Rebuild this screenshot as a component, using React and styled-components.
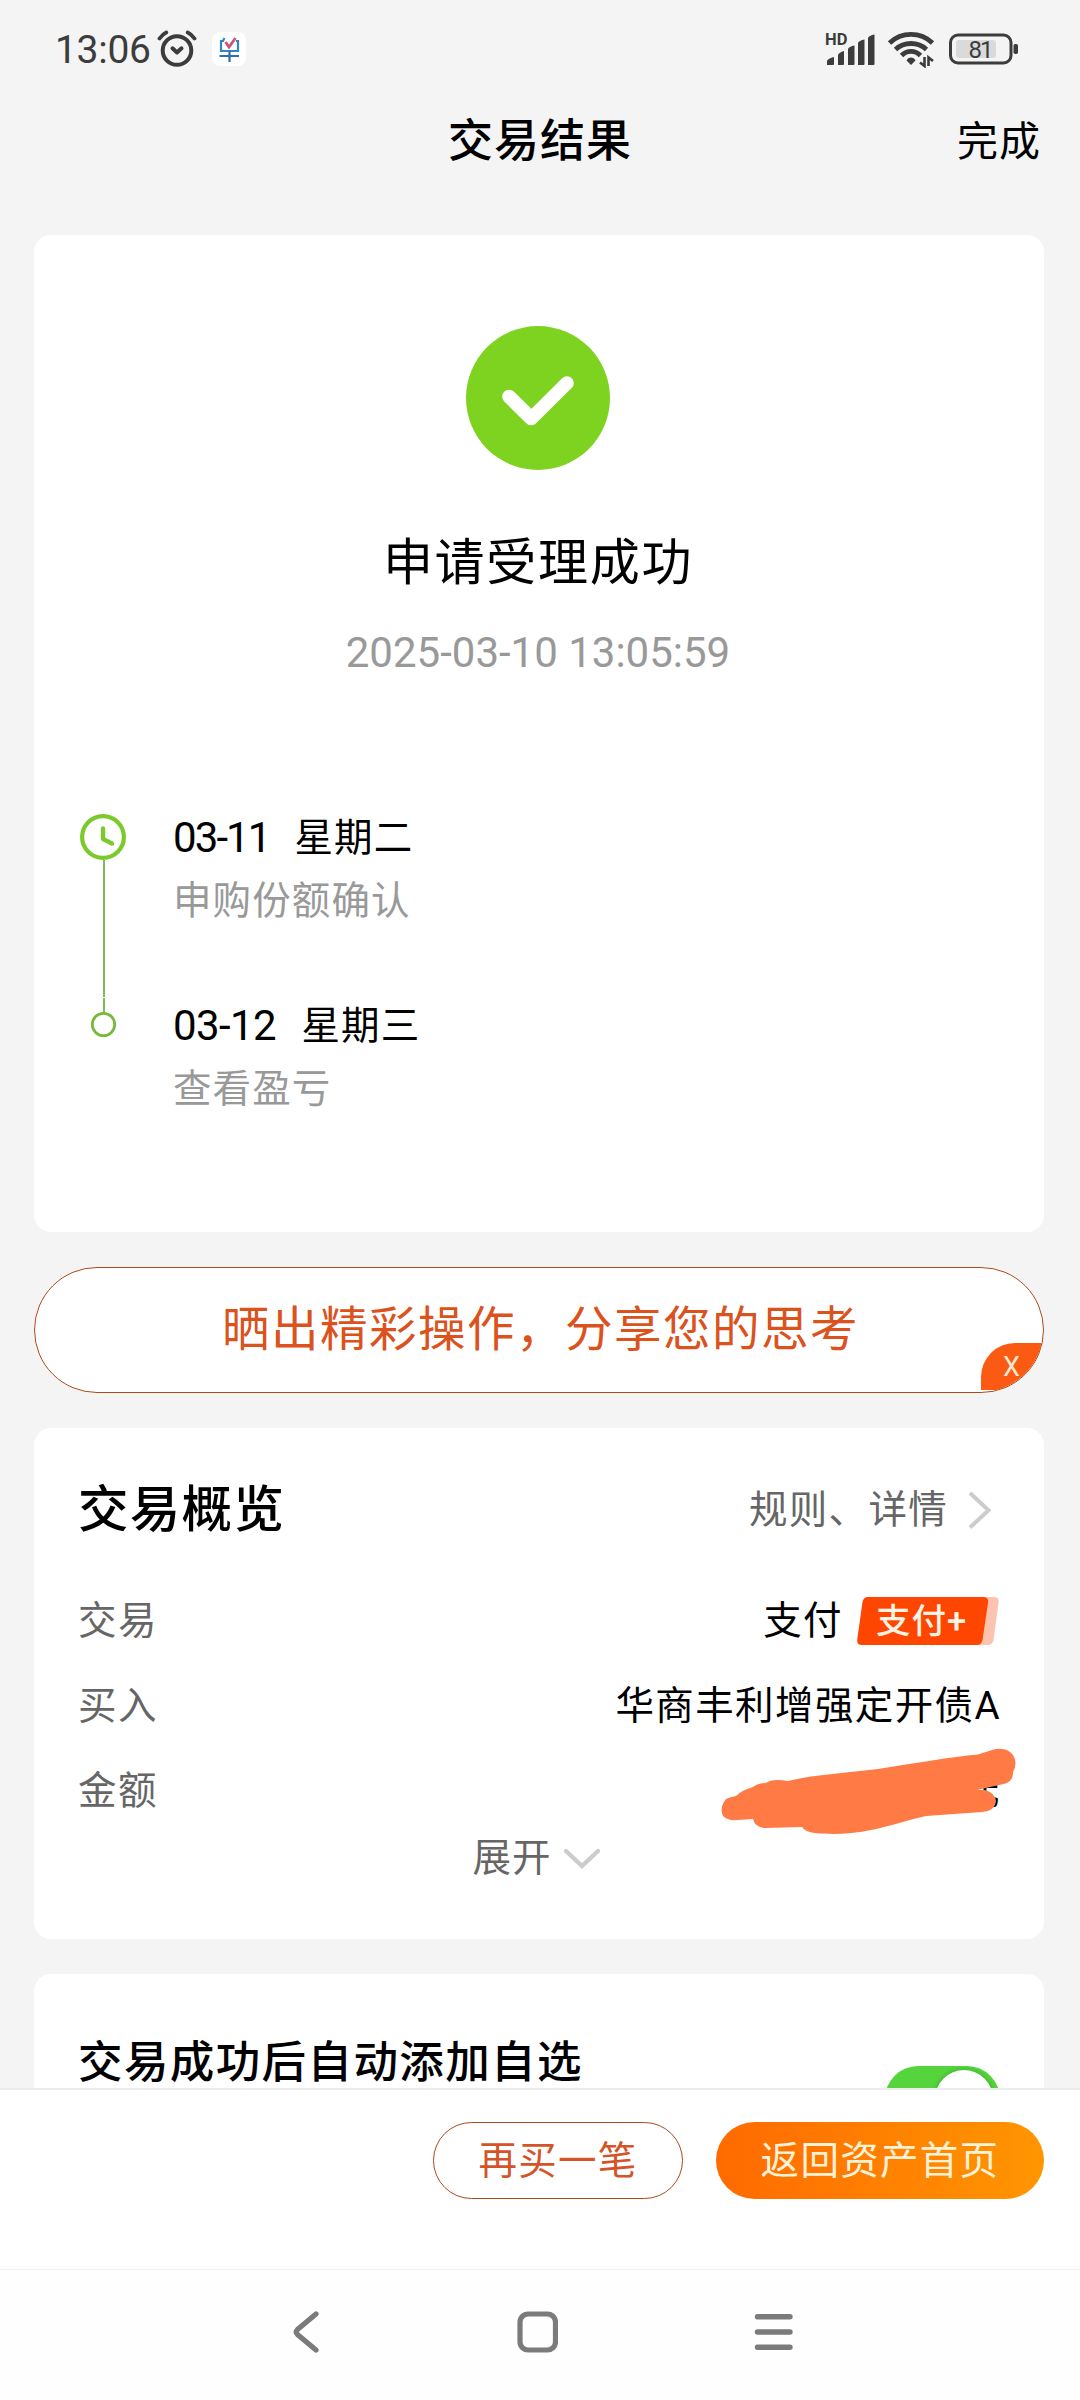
import React from 'react'
import styled, { createGlobalStyle } from 'styled-components'

const GlobalStyle = createGlobalStyle`
  * {
    box-sizing: border-box;
  }
  body {
    margin: 0;
    background: #f4f4f4;
    font-family: Roboto, 'Noto Sans CJK SC', sans-serif;
    color: #000;
  }
`
const Screen = styled.div`
  display: flex;
  flex-direction: column;
  width: 1080px;
  height: 2400px;
  overflow: hidden;
`
const StatusBar = styled.div`
  display: flex;
  justify-content: space-between;
  align-items: center;
  height: 98px;
  padding: 0 61px 0 55px;
  color: #3c3c3c;
`
const StatusGroup = styled.div`
  display: flex;
  align-items: center;
  gap: ${(props) => props.$gap}px;

  & .wifi {
    margin-right: 2px;
  }
`
const Time = styled.span`
  width: 95px;
  padding-top: 2px;
  font-size: 39px;
  line-height: 60px;
  letter-spacing: -0.3px;
  white-space: nowrap;
`
const AppBadge = styled.div`
  display: flex;
  width: 34px;
  height: 34px;
  margin-left: 8px;
  border-radius: 8px;
  background: #fff;
`
const TitleBar = styled.header`
  display: grid;
  grid-template-columns: 1fr auto 1fr;
  align-items: center;
  height: 84px;
  padding: 4px 39px 0;
  margin-bottom: 53px;
`
const Title = styled.h1`
  grid-column: 2;
  margin: 0;
  font-size: 45px;
  font-weight: 500;
  line-height: 80px;
  letter-spacing: 1px;
`
const Done = styled.span`
  justify-self: end;
  font-size: 41px;
  line-height: 78px;
  letter-spacing: 1px;
`
const Content = styled.main`
  display: flex;
  flex: 1;
  flex-direction: column;
  gap: 35px;
  min-height: 0;
  padding: 0 36px 0 34px;
  overflow: hidden;
`
const Card = styled.section`
  flex: none;
  height: ${(props) => props.$height}px;
  padding: ${(props) => props.$padding};
  border-radius: 17px;
  background: #fff;
`
const Result = styled.div`
  display: flex;
  flex-direction: column;
  align-items: center;
  padding-right: 2px;
`
const ResultText = styled.div`
  margin-top: 57px;
  font-size: 50px;
  line-height: 72px;
  letter-spacing: 1.7px;
`
const ResultTime = styled.div`
  margin-top: 24px;
  color: #999;
  font-size: 42px;
  line-height: 60px;
`
const Timeline = styled.div`
  display: grid;
  grid-template-columns: 46px 1fr;
  column-gap: 47px;
  margin-top: 125px;

  & > svg {
    margin-top: 6px;
  }
`
const Steps = styled.div`
  display: flex;
  flex-direction: column;
  gap: 64px;
`
const Step = styled.div`
  font-size: 38.5px;
  line-height: 62px;
  letter-spacing: 1.1px;
`
const StepDate = styled.div`
  display: flex;
  margin: -1px 0 1px;
`
const DateText = styled.span`
  width: ${(props) => props.$width}px;
  font-size: 42px;
  letter-spacing: ${(props) => props.$spacing}px;
`
const StepNote = styled.div`
  color: #999;
`
const ShareBanner = styled.div`
  position: relative;
  flex: none;
  height: 126px;
  padding-left: 3px;
  border: 1px solid #ad4a1a;
  border-radius: 63px;
  background: #fff;
  color: #db521d;
  font-size: 47.5px;
  line-height: 124px;
  letter-spacing: 1.5px;
  text-align: center;
  overflow: hidden;
`
const CloseTag = styled.span`
  position: absolute;
  right: 0;
  bottom: 2px;
  width: 62px;
  height: 47px;
  padding-right: 23px;
  border-top-left-radius: 34px;
  background: #fb5a13;
  color: #ffe9d2;
  font-size: 27px;
  line-height: 49px;
  letter-spacing: 0;
  text-align: right;
`
const CardHead = styled.div`
  display: flex;
  justify-content: space-between;
  align-items: center;
  height: 72px;
  margin-bottom: 32px;
`
const CardTitle = styled.h2`
  margin: 0;
  font-size: ${(props) => props.$size}px;
  font-weight: 500;
  line-height: 74px;
  letter-spacing: ${(props) => props.$spacing}px;
`
const MoreLink = styled.div`
  display: flex;
  align-items: center;
  gap: 20px;
  padding-right: 9px;
  color: #666;
  font-size: 38.5px;
  line-height: 50px;
  letter-spacing: 1.3px;
`
const Row = styled.div`
  position: relative;
  display: flex;
  justify-content: space-between;
  align-items: center;
  height: 85px;
  font-size: 38.5px;
  line-height: 50px;
  letter-spacing: 1.4px;
`
const Label = styled.span`
  color: #666;
`
const Value = styled.span`
  display: flex;
  align-items: center;
  gap: 14px;
`
const PayTag = styled.span`
  position: relative;
  width: 142px;
  height: 48px;
  margin-right: 2px;

  & svg {
    display: block;
  }
`
const PayTagText = styled.span`
  position: absolute;
  left: 19px;
  top: 0;
  color: #fff3e4;
  font-size: 34.5px;
  font-weight: 500;
  line-height: 48px;
  letter-spacing: 1px;
  white-space: nowrap;
`
const Scribble = styled.svg`
  position: absolute;
  right: -15px;
  top: -3px;
`
const Expand = styled.div`
  display: flex;
  justify-content: center;
  align-items: center;
  gap: 12px;
  height: 50px;
  padding-right: 7px;
  color: #666;
  font-size: 38.5px;
  line-height: 50px;
  letter-spacing: 1px;
`
const SwitchRow = styled.div`
  display: flex;
  justify-content: space-between;
  align-items: flex-start;
`
const Switch = styled.div`
  display: flex;
  justify-content: flex-end;
  width: 115px;
  height: 66px;
  margin-top: 40px;
  padding: 4px 7px;
  border-radius: 33px;
  background: #55d43c;
`
const Knob = styled.div`
  width: 58px;
  height: 58px;
  border-radius: 50%;
  background: #fff;
  box-shadow: 0 0 5px rgba(0, 80, 0, 0.35);
`
const Footer = styled.footer`
  display: flex;
  justify-content: flex-end;
  gap: 33px;
  height: 181px;
  padding: 32px 36px 0 0;
  border-top: 2px solid #ececec;
  background: #fff;
`
const Button = styled.button`
  width: ${(props) => props.$width}px;
  height: 77px;
  padding: 0;
  border: ${(props) => (props.$primary ? 'none' : '1px solid #ad4a1a')};
  border-radius: 39px;
  background: ${(props) =>
    props.$primary ? 'linear-gradient(90deg, #ff6a00, #ff9600)' : '#fff'};
  color: ${(props) => (props.$primary ? '#fff2d6' : '#d4542a')};
  font-family: inherit;
  font-size: 38.5px;
  line-height: 74px;
  letter-spacing: 1.3px;
`
const NavBar = styled.nav`
  display: flex;
  justify-content: space-between;
  height: 131px;
  padding: 40px 286px 0 292px;
  border-top: 1px solid #f2f2f2;
  background: #fefefe;
`

const AlarmIcon = () => (
  <svg width='40' height='38' viewBox='0 0 40 38' fill='none' stroke='#3c3c3c'>
    <circle cx='20' cy='20.5' r='14.3' strokeWidth='4' />
    <path d='M2.5 8.5 C4.5 5.5 6.5 3.8 9.3 2.5 M37.5 8.5 C35.5 5.5 33.5 3.8 30.7 2.5' strokeWidth='3.8' strokeLinecap='round' />
    <path d='M15.5 18.3 L20 22.5 L24.5 18.3' strokeWidth='4' strokeLinecap='round' strokeLinejoin='round' />
  </svg>
)

const AppLogo = () => (
  <svg width='34' height='34' viewBox='0 0 34 34' fill='none' strokeWidth='2.2'>
    <path d='M12.5 6 L11 9 H9 V19 H26 V9 H24' stroke='#2f86c8' />
    <path d='M7.5 24 H27 M17.5 19 V30' stroke='#2f6cb4' />
    <path d='M13.5 10 L17 15 L23.5 6' stroke='#cc5577' strokeWidth='2.8' />
  </svg>
)

const SignalIcon = () => (
  <svg width='50' height='40' viewBox='0 -2 50 40' fill='#3c3c3c'>
    <path d='M2 34 V30 Q3 27.5 9 26 V33 Q9 34 8 34 Z' />
    <path d='M13 34 V24 Q14 21.5 19 20 V33 Q19 34 18 34 Z' />
    <path d='M23 34 V18 Q24 15.5 29.5 14.5 V33 Q29.5 34 28.5 34 Z' />
    <path d='M33 34 V12 Q34 9.5 39.5 8.5 V33 Q39.5 34 38.5 34 Z' />
    <path d='M43 34 V7 Q44 4.5 49.5 3.5 V33 Q49.5 34 48.5 34 Z' />
    <text x='0' y='14' fontFamily='Roboto' fontWeight='700' fontSize='16.5'>HD</text>
  </svg>
)

const WifiIcon = () => (
  <svg className='wifi' width='48' height='38' viewBox='0 0 48 38' fill='none' stroke='#3c3c3c' strokeWidth='4.8'>
    <path d='M2.5 13 C14.5 1.5 33.5 1.5 45.5 13' />
    <path d='M8.5 19.5 C17 11.5 31 11.5 39.5 19.5' />
    <path d='M14.5 25.5 C20 20 28 20 33.5 25.5' />
    <path d='M24 27.5 Q27 27.5 28.5 30.5 L24 35 L19.5 30.5 Q21 27.5 24 27.5 Z' fill='#3c3c3c' stroke='none' />
    <path d='M37.5 27 V36 L33 32.5 M41.5 36 V27.5 L46 31' strokeWidth='2.6' />
  </svg>
)

const BatteryIcon = () => (
  <svg width='70' height='32' viewBox='0 0 70 32'>
    <rect x='1.5' y='2' width='60.5' height='28' rx='7.5' fill='none' stroke='#3c3c3c' strokeWidth='3' />
    <rect x='7' y='7' width='40' height='18' rx='3' fill='#dadada' />
    <rect x='64.5' y='11' width='4.5' height='10' rx='1.8' fill='#3c3c3c' />
    <text x='19.5' y='24.5' fontFamily='Roboto' fontSize='24' fill='#3c3c3c' textLength='25'>81</text>
  </svg>
)

const SuccessIcon = () => (
  <svg width='144' height='144' viewBox='0 0 144 144' fill='none'>
    <circle cx='72' cy='72' r='72' fill='#7ed321' />
    <path d='M43 70.5 L65.3 92.5 L101 57' stroke='#fff' strokeWidth='13.7' strokeLinecap='round' strokeLinejoin='round' />
  </svg>
)

const TimelineRail = () => (
  <svg width='46' height='226' viewBox='0 0 46 226' fill='none'>
    <circle cx='23' cy='23' r='20.9' stroke='#7aca2c' strokeWidth='4.2' />
    <path d='M23 14.5 V25 L32 29.5' stroke='#7aca2c' strokeWidth='4.4' strokeLinecap='round' strokeLinejoin='round' />
    <path d='M24 46 V183 M24 184 V199' stroke='#7fb857' strokeWidth='2' />
    <circle cx='23.5' cy='210.5' r='11.2' stroke='#78b83c' strokeWidth='2.8' />
  </svg>
)

const ArrowRight = () => (
  <svg width='24' height='38' viewBox='0 0 24 38' fill='none'>
    <path d='M2 2 L20.5 19.3 L2 36.5' stroke='#ccc' strokeWidth='4' />
  </svg>
)

const ArrowDown = () => (
  <svg width='36' height='24' viewBox='0 0 36 24' fill='none'>
    <path d='M2 5 L18 20 L34 5' stroke='#ccc' strokeWidth='4.4' strokeLinecap='round' />
  </svg>
)

const PayBadge = () => (
  <PayTag>
    <svg width='142' height='48' viewBox='0 0 142 48'>
      <path d='M20 0 H137 Q142.5 0 141.5 6 L136.5 43 Q135.5 48 131 48 H20 Z' fill='#fcc4b0' />
      <path d='M11 0 H126 Q132 0 131 6 L125.5 43 Q124.5 48 120 48 H5 Q-0.5 48 0.3 42 L5.5 5 Q6.5 0 11 0 Z' fill='#ff4600' />
    </svg>
    <PayTagText>支付+</PayTagText>
  </PayTag>
)

const Marker = () => (
  <Scribble width='300' height='92' viewBox='0 0 300 92'>
    <path
      d='M10 54 Q3 63 7 71 Q12 76 21 75 L37 74 Q39 82 48 83 L86 82 Q89 87 99 88 C130 91 152 86 168 82 C184 78 200 73 210 71 L266 67 Q279 66 280 56 Q279 48 269 45 L261 45 L283 40 Q298 38 297 27 Q302 18 297 10 Q290 1 276 5 L262 9.5 C235 12 200 18 162 24 C130 28 95 30 72 36 Q56 33 50 38 Q42 38 37 42 Q26 45 20 51 Q14 52 10 54 Z'
      fill='#ff7a45'
    />
  </Scribble>
)

const App = () => (
  <>
    <GlobalStyle />
    <Screen>
      <StatusBar>
        <StatusGroup $gap={7}>
          <Time>13:06</Time>
          <AlarmIcon />
          <AppBadge>
            <AppLogo />
          </AppBadge>
        </StatusGroup>
        <StatusGroup $gap={12}>
          <SignalIcon />
          <WifiIcon />
          <BatteryIcon />
        </StatusGroup>
      </StatusBar>
      <TitleBar>
        <Title>交易结果</Title>
        <Done>完成</Done>
      </TitleBar>
      <Content>
        <Card $height={997} $padding='91px 46px 0'>
          <Result>
            <SuccessIcon />
            <ResultText>申请受理成功</ResultText>
            <ResultTime>2025-03-10 13:05:59</ResultTime>
          </Result>
          <Timeline>
            <TimelineRail />
            <Steps>
              <Step>
                <StepDate>
                  <DateText $width={121.5} $spacing={-1.9}>03-11</DateText>
                  星期二
                </StepDate>
                <StepNote>申购份额确认</StepNote>
              </Step>
              <Step>
                <StepDate>
                  <DateText $width={128.5} $spacing={-0.6}>03-12</DateText>
                  星期三
                </StepDate>
                <StepNote>查看盈亏</StepNote>
              </Step>
            </Steps>
          </Timeline>
        </Card>
        <ShareBanner>
          晒出精彩操作，分享您的思考
          <CloseTag>X</CloseTag>
        </ShareBanner>
        <Card $height={511} $padding='46px 43px 0 44px'>
          <CardHead>
            <CardTitle $size={50.5} $spacing={1.3}>交易概览</CardTitle>
            <MoreLink>
              规则、详情
              <ArrowRight />
            </MoreLink>
          </CardHead>
          <Row>
            <Label>交易</Label>
            <Value>
              支付
              <PayBadge />
            </Value>
          </Row>
          <Row>
            <Label>买入</Label>
            <Value>华商丰利增强定开债A</Value>
          </Row>
          <Row>
            <Label>金额</Label>
            <Value>元</Value>
            <Marker />
          </Row>
          <Expand>
            展开
            <ArrowDown />
          </Expand>
        </Card>
        <Card $height={240} $padding='52px 44px 0 44px'>
          <SwitchRow>
            <CardTitle $size={44.5} $spacing={1.4}>交易成功后自动添加自选</CardTitle>
            <Switch>
              <Knob />
            </Switch>
          </SwitchRow>
        </Card>
      </Content>
      <Footer>
        <Button $width={250}>再买一笔</Button>
        <Button $width={328} $primary>返回资产首页</Button>
      </Footer>
      <NavBar>
        <svg width='28' height='44' viewBox='0 0 28 44' fill='none'>
          <path d='M24 4 L5.5 19.5 Q3 22 5.5 24.5 L24 40' stroke='#7b7b7b' strokeWidth='5.2' strokeLinecap='round' />
        </svg>
        <svg width='42' height='44' viewBox='0 0 42 44' fill='none'>
          <rect x='4' y='4' width='35.5' height='36' rx='8' stroke='#7b7b7b' strokeWidth='5.2' />
        </svg>
        <svg width='40' height='44' viewBox='0 0 40 44' fill='none'>
          <path d='M3.5 6.7 H36 M3.5 22 H36 M3.5 37.3 H36' stroke='#7b7b7b' strokeWidth='5.4' strokeLinecap='round' />
        </svg>
      </NavBar>
    </Screen>
  </>
)

export default App
